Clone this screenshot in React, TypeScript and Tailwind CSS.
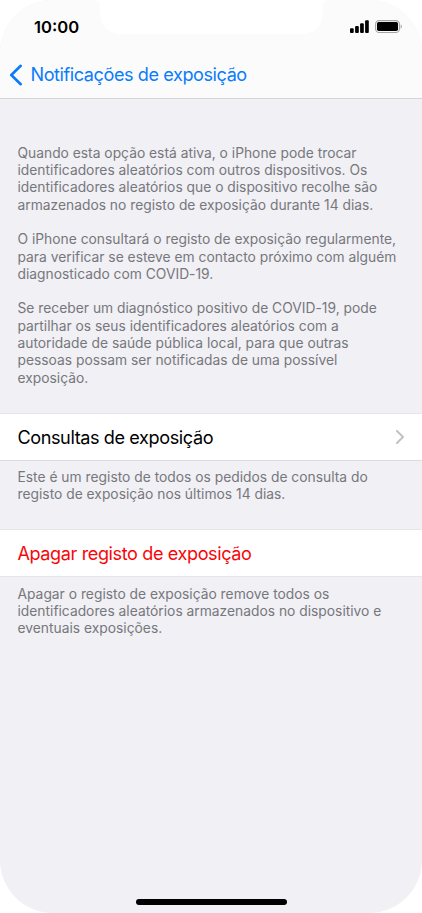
const introduction: string[][] = [
  [
    'Quando esta opção está ativa, o iPhone pode trocar',
    'identificadores aleatórios com outros dispositivos. Os',
    'identificadores aleatórios que o dispositivo recolhe são',
    'armazenados no registo de exposição durante 14 dias.',
  ],
  [
    'O iPhone consultará o registo de exposição regularmente,',
    'para verificar se esteve em contacto próximo com alguém',
    'diagnosticado com COVID-19.',
  ],
  [
    'Se receber um diagnóstico positivo de COVID-19, pode',
    'partilhar os seus identificadores aleatórios com a',
    'autoridade de saúde pública local, para que outras',
    'pessoas possam ser notificadas de uma possível',
    'exposição.',
  ],
];

function Paragraph({ lines }: { lines: string[] }) {
  return (
    <p className="text-[13.8px] leading-[17.3px] tracking-[0.01px] text-[#77777c]">
      {lines.map((line) => (
        <span key={line} className="block whitespace-nowrap">
          {line}
        </span>
      ))}
    </p>
  );
}

function StatusBar() {
  return (
    <div className="relative flex h-[51px] justify-between pl-[34px] pr-[20px]">
      <svg className="absolute left-[94px] top-0" width="235" height="34" viewBox="0 0 235 34" fill="white">
        <path d="M0 0c4 0 6 2 6 6v6c0 14 8 22 22 22h179c14 0 22-8 22-22V6c0-4 2-6 6-6z" />
      </svg>
      <span className="pt-[15px] text-[16.6px] font-semibold leading-[24px] tracking-[0px] text-black">
        10:00
      </span>
      <div className="flex gap-[6px] pt-[20px]">
        <svg width="19" height="13" viewBox="0 0 19 13" fill="black">
          <rect x="0" y="8.3" width="3.7" height="4.7" rx="1" />
          <rect x="5.1" y="6" width="3.7" height="7" rx="1" />
          <rect x="10.1" y="3.2" width="3.7" height="9.8" rx="1" />
          <rect x="15.1" y="0.3" width="3.7" height="12.7" rx="1" />
        </svg>
        <svg width="27" height="13" viewBox="0 0 27 13">
          <rect x="0.6" y="0.6" width="23.8" height="11.9" rx="3.6" fill="none" stroke="#a5a5a7" strokeWidth="1.1" />
          <rect x="2" y="2" width="21" height="9.1" rx="1.8" fill="black" />
          <path d="M25.6 4.5v4.2c.8-.3 1.3-1.1 1.3-2.1s-.5-1.8-1.3-2.1z" fill="#a5a5a7" />
        </svg>
      </div>
    </div>
  );
}

export default function App() {
  return (
    <div className="h-[913px] w-[422px] bg-white font-['Inter','Liberation_Sans',sans-serif]">
      <main className="flex h-full flex-col overflow-hidden rounded-[53px] bg-[#f0f0f5]">
        <header className="h-[99px] border-b border-[#d5d5d8] bg-[#fbfbfb]">
          <StatusBar />
          <button className="flex h-[47px] items-center pl-[9px] text-[#0a7bfb]">
            <svg width="14" height="22" viewBox="0 0 14 22" fill="none" className="mr-[7.5px]">
              <path d="M11.7 1.8L2.3 11l9.4 9.2" stroke="currentColor" strokeWidth="2.6" strokeLinecap="round" strokeLinejoin="round" />
            </svg>
            <span className="whitespace-nowrap pt-px text-[18.1px] tracking-[-0.43px]">Notificações de exposição</span>
          </button>
        </header>

        <section className="flex h-[314px] flex-col gap-[17.3px] pl-[17.5px] pt-[45.8px]">
          {introduction.map((lines) => (
            <Paragraph key={lines[0]} lines={lines} />
          ))}
        </section>

        <button className="flex h-[48px] shrink-0 items-center justify-between border-y border-b-[#dcdce0] border-t-[#e6e6ea] bg-white pl-[17.4px] pr-[17px] text-black">
          <span className="whitespace-nowrap pt-px text-[18.1px] tracking-[-0.4px]">Consultas de exposição</span>
          <svg width="10" height="14" viewBox="0 0 10 14" fill="none">
            <path d="M2 1l6 6-6 6" stroke="#c2c2c5" strokeWidth="2" strokeLinecap="round" strokeLinejoin="round" />
          </svg>
        </button>
        <section className="h-[68px] pl-[17.5px] pt-[7.5px]">
          <Paragraph
            lines={['Este é um registo de todos os pedidos de consulta do', 'registo de exposição nos últimos 14 dias.']}
          />
        </section>

        <button className="flex h-[48px] shrink-0 items-center border-y border-[#e6e6ea] bg-white pl-[17.4px] text-[#f80509]">
          <span className="whitespace-nowrap pt-px text-[18.1px] tracking-[-0.4px]">Apagar registo de exposição</span>
        </button>
        <section className="pl-[17.5px] pt-[8.8px]">
          <Paragraph
            lines={[
              'Apagar o registo de exposição remove todos os',
              'identificadores aleatórios armazenados no dispositivo e',
              'eventuais exposições.',
            ]}
          />
        </section>

        <div className="mb-[8px] mt-auto h-[6px] w-[151px] self-center rounded-full bg-black" />
      </main>
    </div>
  );
}
